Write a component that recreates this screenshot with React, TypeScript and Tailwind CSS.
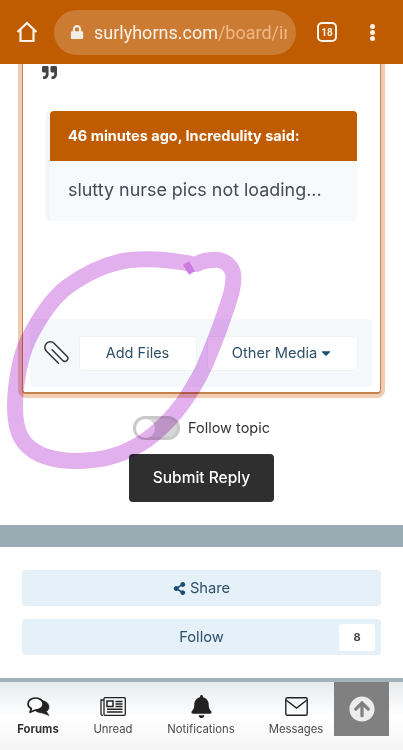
import React from "react";
import { FaQuoteRight, FaBell, FaArrowCircleUp, FaShareAlt, FaCaretDown, FaLock } from "react-icons/fa";

function NavItem({ icon, label, bold, w }: { icon: React.ReactNode; label: string; bold?: boolean; w: string }) {
  return (
    <div className={`flex flex-col items-center ${w}`}>
      <div className="h-[28px] flex items-center justify-center text-[#222]">{icon}</div>
      <div className={`text-[11.3px] leading-[16px] mt-[1px] whitespace-nowrap ${bold ? "font-bold text-[#333]" : "text-[#4a4a4a]"}`}>{label}</div>
    </div>
  );
}

export default function App() {
  return (
    <div className="relative w-[403px] h-[750px] overflow-hidden bg-white font-['Inter',sans-serif] flex flex-col">
      <header className="relative z-10 h-[64px] shrink-0 bg-[#bf5b00] flex items-center text-[#fdf3e8]">
        <div className="w-[54px] flex justify-center">
          <svg width="22" height="22" viewBox="0 0 22 22" fill="none" stroke="currentColor" strokeWidth="2.2" strokeLinejoin="miter">
            <path d="M1.5 11 L11 2 L20.5 11 M4.5 9 V20 H17.5 V9" />
          </svg>
        </div>
        <div className="w-[242px] h-[45px] rounded-full bg-[#cc7b33] flex items-center pl-[16px] font-['Roboto',sans-serif] text-[18px] overflow-hidden whitespace-nowrap">
          <FaLock size={14} className="text-[#f1ece7] mr-[10px] shrink-0" />
          <span className="text-[#fbf1e7]">surlyhorns.com</span>
          <span className="text-[#eeb98a] w-[69px] overflow-hidden">/board/in</span>
        </div>
        <div className="ml-[21px] w-[20px] h-[20px] border-2 border-[#fdf3e8] rounded-[5px] flex items-center justify-center text-[10px] font-bold font-['Roboto',sans-serif]">18</div>
        <div className="ml-[33px] flex flex-col gap-[1px]">
          <span className="w-[5px] h-[5px] rounded-full bg-[#fdf3e8]" />
          <span className="w-[5px] h-[5px] rounded-full bg-[#fdf3e8]" />
          <span className="w-[5px] h-[5px] rounded-full bg-[#fdf3e8]" />
        </div>
      </header>

      <main className="h-[461px] shrink-0 flex flex-col items-center">
        <section className="-mt-[10px] w-[359px] h-[340px] shrink-0 rounded-[4px] border border-b-2 border-[#c4824f] ring-[4px] ring-[#f0cdb2] bg-white flex flex-col">
          <FaQuoteRight size={15} className="ml-[19px] mt-[10px] text-[#444]" />
          <div className="mt-[31px] ml-[23px] w-[311px] border-l-[4px] border-[#f2f6fa] rounded-[4px]">
            <div className="h-[50px] bg-[#bf5b00] rounded-t-[4px] flex items-center pl-[18px] pb-[1px] text-[14.5px] font-bold text-white">46 minutes ago, Incredulity said:</div>
            <div className="h-[60px] bg-[#f6fafd] flex items-center pl-[18px] pb-[2px] text-[17.9px] text-[#444b55]">slutty nurse pics not loading...</div>
          </div>
          <div className="mt-auto mb-[5px] ml-[7px] mr-[8px] h-[68px] rounded-[4px] bg-[#f5f9fc] flex items-center">
            <svg width="28" height="28" viewBox="0 0 28 28" fill="none" stroke="#333" strokeWidth="1.5" strokeLinecap="round" className="ml-[12px] -mr-[1px] shrink-0">
              <g transform="translate(14 14) rotate(-45) translate(-9 -14)">
                <path d="M8.5 9 V24 a3 3 0 0 0 6 0 V6 a5.5 5.5 0 0 0 -11 0 V23" />
              </g>
            </svg>
            <div className="ml-[10px] w-[118px] h-[35px] rounded-[3px] bg-white border border-[#eef3f7] flex items-center justify-center pr-[1px] text-[14.5px] text-[#2d5068]">Add Files</div>
            <div className="ml-[10px] w-[151px] h-[35px] rounded-[3px] bg-white border border-[#eef3f7] flex items-center justify-center gap-[2px] text-[14.7px] text-[#2d5068]">Other Media<FaCaretDown size={14} className="text-[#164e74]" /></div>
          </div>
        </section>
        <div className="mt-[22px] flex items-center gap-[8px]">
          <div className="w-[47px] h-[24px] rounded-full bg-[#d6d6d6] border-[3px] border-[#c9c9c9] flex items-center">
            <div className="w-[19px] h-[19px] rounded-full bg-white" />
          </div>
          <span className="text-[14.5px] text-[#333]">Follow topic</span>
        </div>
        <button className="mt-[14px] w-[145px] h-[48px] rounded-[4px] bg-[#2f2f2f] text-white text-[15.5px] font-medium">Submit Reply</button>
      </main>

      <div className="h-[22px] shrink-0 bg-[#9babb4]" />

      <div className="h-[131px] shrink-0 px-[22px] pt-[23px] flex flex-col gap-[13px]">
        <div className="h-[36px] rounded-[4px] bg-[#e5f0f9] flex items-center justify-center gap-[4px] text-[#2d5068] text-[14.7px]">
          <FaShareAlt size={13} className="text-[#164e74]" />Share
        </div>
        <div className="relative h-[36px] rounded-[4px] bg-[#e5f0f9] flex items-center justify-center text-[#2d5068] text-[14.7px]">
          Follow
          <span className="absolute right-[6px] top-[5px] w-[36px] h-[27px] rounded-[3px] bg-white flex items-center justify-center text-[11px] font-bold text-[#444]">8</span>
        </div>
      </div>

      <nav className="relative flex-1 border-t-[4px] border-[#a3b1b9] bg-gradient-to-b from-[#e7ebee] via-white to-[#f5f5f5] flex pt-[10px] pl-[12px]">
        <NavItem w="w-[52px]" bold label="Forums" icon={
          <svg width="23" height="19" viewBox="0 0 23 19" stroke="currentColor">
            <path d="M14 3.5 C19 3.5 22 6.5 22 10 C22 12 21 13.5 19.5 14.5 L22 18.5 L15 16 C12 16 10 15 8 13.5 Z" fill="currentColor" strokeWidth="0.5" />
            <path d="M8.5 1 C13 1 16.2 3.6 16.2 7 C16.2 10.4 13 13 8.5 13 L3 15.2 L4.3 11.6 C2.2 10.5 1 8.9 1 7 C1 3.6 4 1 8.5 1 Z" fill="#fbfcfc" strokeWidth="1.7" strokeLinejoin="round" />
          </svg>
        } />
        <NavItem w="w-[60px] ml-[19px]" label="Unread" icon={
          <svg width="26" height="19" viewBox="0 0 26 19" fill="none" stroke="currentColor" strokeWidth="1.3">
            <rect x="4" y="0.7" width="21.3" height="17.6" rx="1" />
            <path d="M4 3 H1 V17 Q1 18.3 3 18.3" />
            <rect x="7" y="4" width="6" height="5.5" strokeWidth="1.5" />
            <path d="M15.5 4.5 H22.5 M15.5 7 H22.5 M15.5 9.5 H22.5 M7 12.3 H22.5 M7 15 H22.5" strokeWidth="1.4" />
          </svg>
        } />
        <NavItem w="w-[70px] ml-[23px]" label="Notifications" icon={<FaBell size={23} />} />
        <NavItem w="w-[56px] ml-[32px]" label="Messages" icon={
          <svg width="23" height="19" viewBox="0 0 23 19" fill="none" stroke="currentColor" strokeWidth="1.4">
            <rect x="0.8" y="0.8" width="21.4" height="17.4" rx="1.5" />
            <path d="M1 3 L11.5 11 L22 3" />
          </svg>
        } />
        <div className="absolute left-[334px] top-0 w-[55px] h-[54px] bg-[#808080] flex items-center justify-center">
          <FaArrowCircleUp size={26} className="text-[#ececec]" />
        </div>
      </nav>

      <svg className="absolute inset-0 z-20 pointer-events-none mix-blend-multiply" width="403" height="750" viewBox="0 0 403 750" fill="none">
        <path d="M192 264 C172 260 150 258 130 260 C105 263 85 274 67 287 C50 300 38 320 28 340 C20 357 15 385 15 407 C15 430 22 442 30 448 C42 458 60 461 77 461 C100 461 118 456 133 448 C150 440 172 420 187 397 C198 380 204 368 207 360 C212 348 216 338 220 327 C225 312 230 300 232 290 C234 280 234 274 232 270 C228 262 220 259 213 260 C206 260 202 261 197 264"
          stroke="#e3b0ee" strokeWidth="16" strokeLinecap="round" strokeLinejoin="round" />
        <path d="M186 263 L192 273" stroke="#cc7ce0" strokeWidth="7" />
      </svg>
    </div>
  );
}
